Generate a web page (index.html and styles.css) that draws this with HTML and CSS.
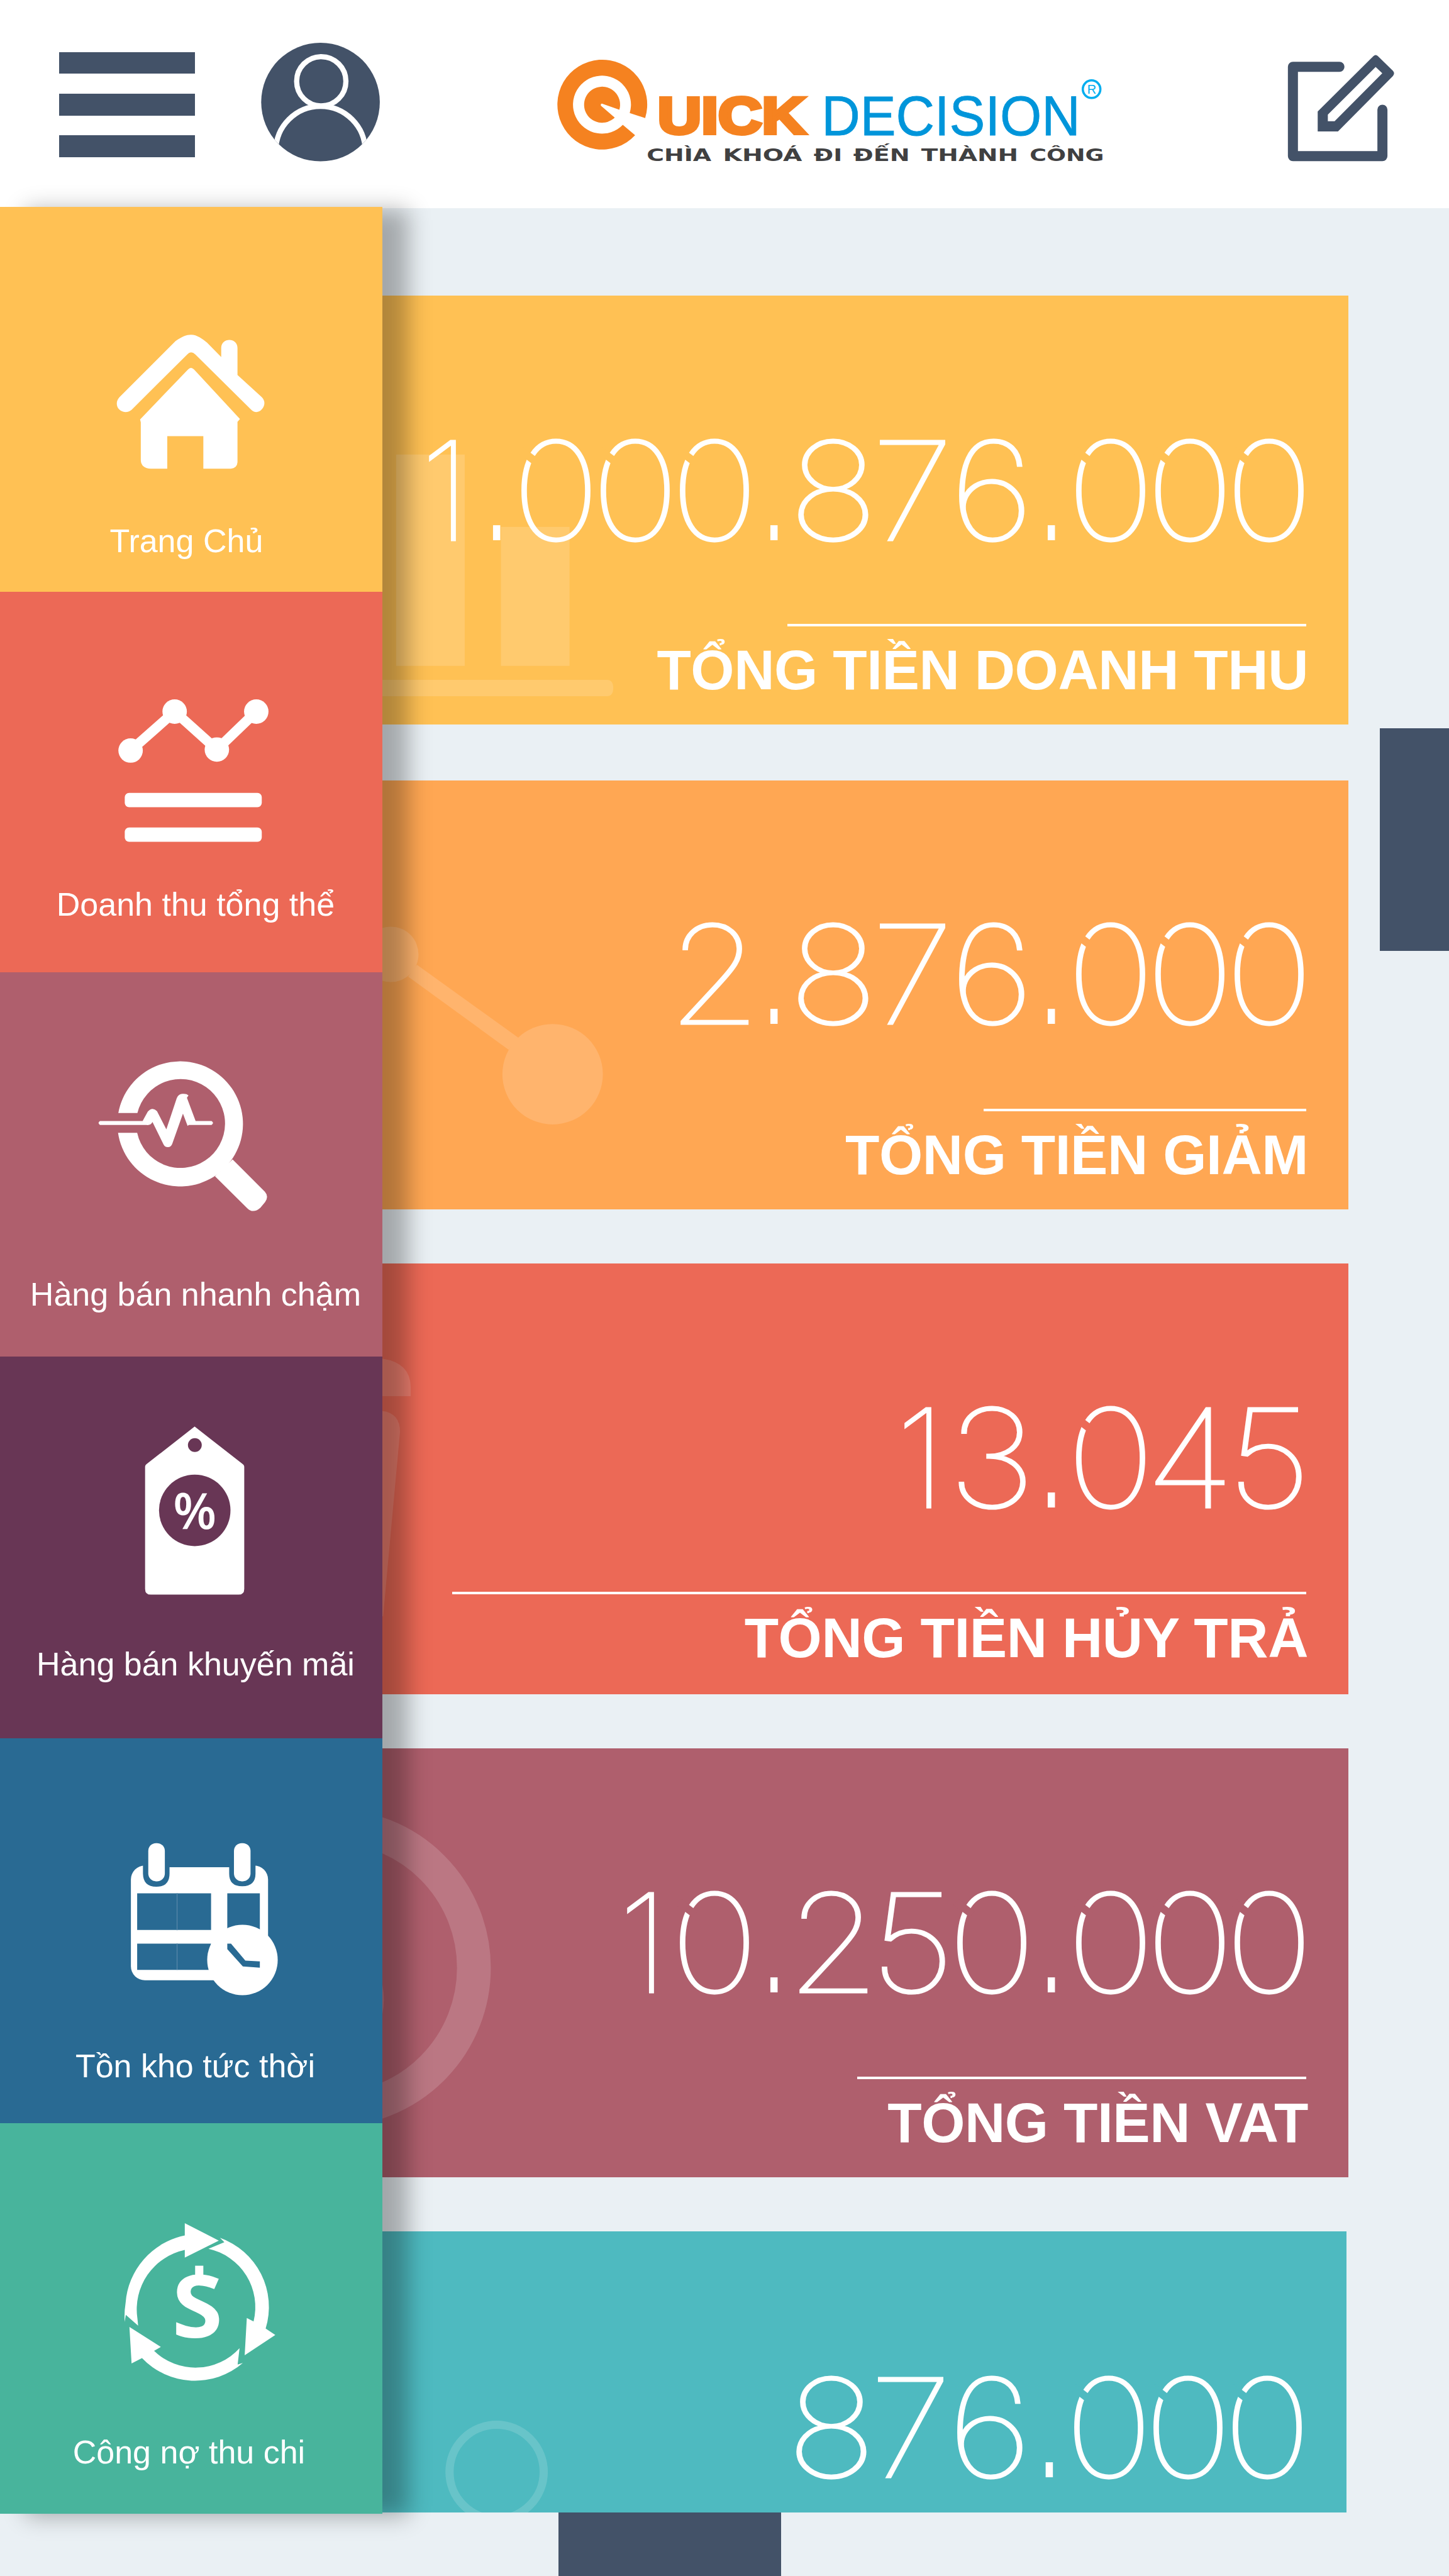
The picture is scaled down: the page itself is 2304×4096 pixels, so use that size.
FILE: index.html
```html
<!DOCTYPE html>
<html lang="vi">
<head>
<meta charset="utf-8">
<title>Quick Decision</title>
<link rel="stylesheet" href="styles.css">
</head>
<body>
<header class="topbar">
  <button class="menu" aria-label="Menu"><span></span><span></span><span></span></button>
  <svg class="user" viewBox="541 88 246 246">
    <defs><clipPath id="disc"><circle cx="664.2" cy="210.8" r="122.8"/></clipPath></defs>
    <circle cx="664.2" cy="210.8" r="122.8" fill="#435268"/>
    <g clip-path="url(#disc)" fill="none" stroke="#fff" stroke-width="10.8">
      <circle cx="665.8" cy="167.7" r="51"/>
      <circle cx="664.2" cy="312" r="92.5"/>
    </g>
  </svg>
  <svg class="logo" viewBox="1150 110 1150 240">
    <g fill="#f58220">
      <path d="M1336 245A93 93 0 1 0 1315.2 280.7L1289.7 259A60 60 0 1 1 1304 234.7Z"/>
      <path d="M1282.6 228A37.3 37.3 0 1 0 1273 244L1244.3 219.3Q1243.5 215 1246.5 215Z"/>
    </g>
    <text class="logo-quick" x="1362" y="277.3" textLength="306" lengthAdjust="spacingAndGlyphs">UICK</text>
    <text class="logo-decision" x="1701" y="281" textLength="536" lengthAdjust="spacingAndGlyphs">DECISION</text>
    <circle cx="2260.3" cy="185.3" r="18.2" fill="none" stroke="#00aeef" stroke-width="4.6"/>
    <text class="logo-r" x="2260.6" y="194.7">R</text>
    <g class="logo-tag">
      <text x="1339" y="333.7" textLength="134" lengthAdjust="spacingAndGlyphs">CHÌA</text>
      <text x="1497" y="333.7" textLength="164" lengthAdjust="spacingAndGlyphs">KHOÁ</text>
      <text x="1685" y="333.7" textLength="59" lengthAdjust="spacingAndGlyphs">ĐI</text>
      <text x="1767" y="333.7" textLength="117" lengthAdjust="spacingAndGlyphs">ĐẾN</text>
      <text x="1907.6" y="333.7" textLength="201" lengthAdjust="spacingAndGlyphs">THÀNH</text>
      <text x="2132" y="333.7" textLength="154" lengthAdjust="spacingAndGlyphs">CÔNG</text>
    </g>
  </svg>
  <svg class="edit" viewBox="2660 108 232 232">
    <path d="M2773 138.3H2676.7V323.3H2862V227" fill="none" stroke="#435268" stroke-width="20.8" stroke-linecap="round" stroke-linejoin="round"/>
    <path fill="#435268" fill-rule="evenodd" d="M2728 230.7L2843.3 116Q2848 112 2852.7 116L2884 146.7Q2888.500 152 2883.3 157.700L2770 272H2728ZM2749 237.300L2848 138.700L2861.700 151.700L2763 251H2749Z"/>
  </svg>
</header>

<main class="page">
  <nav class="sidebar">
    <a class="item home">
      <svg viewBox="0 429 791.5 657.2" fill="#fff">
        <path d="M247.4 823L363.5 706.700C377 697 386 693.500 395.400 693.500C408 693.500 419 702 428.600 710L458 740V721C458 699 491.700 699 491.700 721V777L542 823C555 836 542 853.700 531 853.700C527 853.700 523 852 519.800 848.600L404.300 734.300Q395.400 726 387.800 734.300L273 848.600C269 852 265 853.700 259.600 853.700C243 853 236 835 247.400 823Z"/>
        <path d="M389 766Q395.400 758 403 767L496.800 868L491.700 874V957.800Q491 970 478 971H421V903.700H346.300V971H312.500Q292 970 291.500 953V875L290 869Z"/>
      </svg>
      <span class="label">Trang Chủ</span>
    </a>
    <a class="item revenue">
      <svg viewBox="0 1225 791.5 613" fill="#fff">
        <path d="M270.400 1553.700L361.600 1473L449 1551.600L530.600 1473" fill="none" stroke="#fff" stroke-width="20.500"/>
        <circle cx="270.4" cy="1553.7" r="25.3"/><circle cx="361.6" cy="1473" r="25.3"/>
        <circle cx="449" cy="1551.6" r="25.3"/><circle cx="530.6" cy="1473" r="25.3"/>
        <rect x="258.3" y="1641.400" width="283.700" height="29.600" rx="9"/>
        <rect x="258.3" y="1712.900" width="283.700" height="29.600" rx="9"/>
      </svg>
      <span class="label">Doanh thu tổng thể</span>
    </a>
    <a class="item speed">
      <svg viewBox="0 2012.5 791.5 634" fill="#fff">
        <path d="M245 2304A130 129.500 0 1 1 244.400 2345H284A92 92 0 1 0 284.500 2304Z"/>
        <path d="M481.500 2400L548.500 2467Q557 2477 549 2488L539 2500Q524 2513 512 2501L445 2434.700Z"/>
        <path d="M207 2320.400H295.300L306 2301Q315.700 2290 325 2300L344.400 2337.800L366 2273Q370 2264 378 2264.300Q386 2263.500 390.300 2267.300L387 2272.400L405 2320.400H438Q444 2324.500 438 2328.600H391L388.400 2330.600L378.800 2305L356.500 2368Q354 2374.500 347.600 2374.500Q341 2374.500 338.600 2369L315.700 2322.400Q312 2330 303 2328.600H207Q201 2324.500 207 2320.400Z"/>
      </svg>
      <span class="label">Hàng bán nhanh chậm</span>
    </a>
    <a class="item promo">
      <svg viewBox="0 2808 791.5 603">
        <path fill="#fff" d="M403 2953L503 3031Q505.700 3033 505.700 3036V3289Q505.700 3301 493.700 3301H312.400Q300.400 3301 300.400 3289V3036Q300.400 3033 303 3031Z"/>
        <circle cx="403.4" cy="2991.3" r="14.300" fill="#683655"/>
        <circle cx="403.2" cy="3126.5" r="74" fill="#683655"/>
        <text class="percent" x="403.2" y="3165">%</text>
      </svg>
      <span class="label">Hàng bán khuyến mãi</span>
    </a>
    <a class="item stock">
      <svg viewBox="0 3599.6 791.5 643.7" fill="#fff">
        <rect x="271" y="3863" width="284" height="237.500" rx="29"/>
        <path fill="#296a93" d="M296 3850H351V3880Q351 3907 323.700 3907T296 3880ZM474.500 3850H529V3880Q529 3906 501.700 3906T474.500 3880ZM351 3855H474.500V3866.400H351ZM284 3920.700H437V3996.500H284ZM284 4024.700H437V4079H284ZM470.600 3920.700H538V3996H470.600Z"/>
        <path d="M366.600 3920V3997M366.600 4024V4079" stroke="#5b8bac" stroke-width="1.500"/>
        <rect x="307" y="3816.700" width="34.300" height="79" rx="16"/>
        <rect x="484.400" y="3816.700" width="34.300" height="79" rx="16"/>
        <circle cx="502" cy="4058.600" r="73"/>
        <path fill="#296a93" d="M470.600 4024.700H478.300L508 4059.800L538 4061.500V4074.500L502.800 4072L470.600 4036Z"/>
      </svg>
      <span class="label">Tồn kho tức thời</span>
    </a>
    <a class="item debt">
      <svg viewBox="0 4395.6 791.5 648" fill="#fff">
        <path d="M258 4807L260.500 4792.500L286 4815L284.500 4800A126 126 0 0 1 382.600 4658V4673.800L453 4638.700L382.600 4602.500V4628A154 154 0 0 0 260 4768Q257 4786 258 4807Z"/>
        <path d="M455.400 4633L464.500 4642L431.600 4655.700A123.500 123.500 0 0 1 525 4806L511 4799L506.600 4876L570 4834L550 4820.700A151.500 151.500 0 0 0 455.400 4633Z"/>
        <path d="M496 4861.500L492 4895.400L502.800 4892A151.500 151.500 0 0 1 294 4881.800L272.400 4893L268 4817.400L333 4859L319 4867A123.500 123.500 0 0 0 496 4861.500Z"/>
        <rect x="404" y="4690.700" width="17" height="24"/>
        <text class="dollar" x="356" y="4840" textLength="105" lengthAdjust="spacingAndGlyphs">S</text>
      </svg>
      <span class="label">Công nợ thu chi</span>
    </a>
  </nav>

  <section class="cards">
    <article class="card c1">
      <svg class="decor" viewBox="791.5 612.5 2000 887.8">
        <path d="M820 941.600H962V1379H820ZM1037 1091.500H1179V1379H1037ZM780 1408H1256Q1269.500 1408 1269.500 1425T1256 1442H780Z"/>
      </svg>
      <p class="number"><i class="one">1</i><i class="dot">.</i><i class="zero">0</i><i class="zero">0</i><i class="zero">0</i><i class="dot">.</i><i>8</i><i>7</i><i>6</i><i class="dot">.</i><i class="zero">0</i><i class="zero">0</i><i class="zero">0</i></p>
      <hr class="rule">
      <h2 class="title">TỔNG TIỀN DOANH THU</h2>
    </article>
    <article class="card c2">
      <svg class="decor" viewBox="791.5 1616.4 2000 887.6">
        <circle cx="809" cy="1976.400" r="57.300"/>
        <circle cx="1144" cy="2224.500" r="104"/>
        <path d="M863 1998L1073 2149L1053 2174L845 2022.600Z"/>
      </svg>
      <p class="number"><i>2</i><i class="dot">.</i><i>8</i><i>7</i><i>6</i><i class="dot">.</i><i class="zero">0</i><i class="zero">0</i><i class="zero">0</i></p>
      <hr class="rule">
      <h2 class="title">TỔNG TIỀN GIẢM</h2>
    </article>
    <article class="card c3">
      <svg class="decor" viewBox="791.5 2616.4 2000 892.2">
        <path d="M780 2812Q850 2818 850 2872V2891H780ZM780 2921Q828 2921 828 2965L793 3347H780Z"/>
      </svg>
      <p class="number"><i class="one">1</i><i>3</i><i class="dot">.</i><i class="zero">0</i><i class="four">4</i><i>5</i></p>
      <hr class="rule">
      <h2 class="title">TỔNG TIỀN HỦY TRẢ</h2>
    </article>
    <article class="card c4">
      <svg class="decor" viewBox="791.5 3620 2000 887.5">
        <circle cx="687" cy="4074.500" r="294" fill="none" stroke="#fff" stroke-width="70"/>
        <circle cx="634.500" cy="4140" r="160"/>
      </svg>
      <p class="number"><i class="one">1</i><i class="zero">0</i><i class="dot">.</i><i>2</i><i>5</i><i class="zero">0</i><i class="dot">.</i><i class="zero">0</i><i class="zero">0</i><i class="zero">0</i></p>
      <hr class="rule">
      <h2 class="title">TỔNG TIỀN VAT</h2>
    </article>
    <article class="card c5">
      <svg class="decor" viewBox="791.5 4620 2000 581.8">
        <circle cx="1028" cy="5118" r="97.500" fill="none" stroke="#fff" stroke-width="17"/>
      </svg>
      <p class="number"><i>8</i><i>7</i><i>6</i><i class="dot">.</i><i class="zero">0</i><i class="zero">0</i><i class="zero">0</i></p>
    </article>
  </section>
  <div class="tab tab-right"></div>
  <div class="tab tab-bottom"></div>
</main>
</body>
</html>
```

FILE: styles.css
```css
:root {
  --u: 0.768px; /* one design unit */
  --slate: #435268;
  --yellow: #ffc154;
  --orange: #ffa753;
  --red: #ec6956;
  --mauve: #af5f6d;
  --purple: #683655;
  --blue: #296a93;
  --green: #48b49c;
  --teal: #4ebac0;
}

* { box-sizing: border-box; margin: 0; padding: 0; }

body {
  width: 2304px;
  height: 4096px;
  overflow: hidden;
  background: #eaf0f4;
  font-family: "Liberation Sans", Arial, sans-serif;
}

svg { display: block; }

/* Top bar */
.topbar {
  display: flex;
  align-items: flex-start;
  height: calc(431 * var(--u));
  background: #fff;
}
.menu {
  display: flex;
  flex-direction: column;
  gap: calc(41 * var(--u));
  width: calc(281.5 * var(--u));
  margin: calc(108 * var(--u)) 0 0 calc(121.800 * var(--u));
  border: 0;
  background: none;
}
.menu span { height: calc(45 * var(--u)); background: var(--slate); }
.user {
  width: calc(246 * var(--u));
  height: calc(246 * var(--u));
  margin: calc(88 * var(--u)) 0 0 calc(137.700 * var(--u));
}
.logo {
  width: calc(1150 * var(--u));
  height: calc(240 * var(--u));
  margin: calc(110 * var(--u)) 0 0 calc(363 * var(--u));
}
.logo-quick {
  font-size: 106px;
  font-weight: 700;
  fill: #f58220;
  stroke: #f58220;
  stroke-width: 7.5px;
}
.logo-decision { font-size: 116px; fill: #0095da; stroke: #0095da; stroke-width: 1px; }
.logo-r { font-size: 26px; fill: #00aeef; text-anchor: middle; }
.logo-tag { font-family: "DejaVu Sans", sans-serif; font-size: 35.5px; font-weight: 700; fill: #404041; }
.edit {
  width: calc(232 * var(--u));
  height: calc(232 * var(--u));
  margin: calc(108 * var(--u)) 0 0 calc(360 * var(--u));
}

/* Body */
.page { position: relative; display: flex; height: calc(4902 * var(--u)); }

.sidebar {
  position: relative;
  z-index: 1;
  align-self: flex-start;
  width: calc(791.5 * var(--u));
  margin-top: calc(-2 * var(--u));
  box-shadow: calc(53 * var(--u)) calc(5 * var(--u)) 34px rgba(0, 0, 0, 0.3);
}
.item { display: block; overflow: hidden; color: #fff; text-align: center; }
.item svg { width: 100%; }
.label { display: block; font-size: 52px; line-height: 52px; white-space: nowrap; }
.home { height: calc(796 * var(--u)); background: var(--yellow); }
.revenue { height: calc(787.5 * var(--u)); background: var(--red); }
.speed { height: calc(795.5 * var(--u)); background: var(--mauve); }
.promo { height: calc(791.6 * var(--u)); background: var(--purple); }
.stock { height: calc(796 * var(--u)); background: var(--blue); }
.debt { height: calc(808.4 * var(--u)); background: var(--green); }
.home .label { padding-right: 15px; }
.debt .label { padding-right: 7px; }
.revenue .label, .speed .label, .promo .label { padding-left: 14px; }
.stock .label { padding-left: 13px; }
.percent { font: 600 104px "Open Sans", sans-serif; fill: #fff; text-anchor: middle; }
.dollar { font: 700 181px "Open Sans", sans-serif; }

/* Cards */
.cards {
  display: flex;
  flex-direction: column;
  width: calc(2000 * var(--u));
  padding-top: calc(181.5 * var(--u));
}
.card {
  position: relative;
  display: flex;
  flex-direction: column;
  align-items: flex-end;
  height: calc(887.7 * var(--u));
  margin-bottom: calc(116 * var(--u));
  padding: calc(262 * var(--u)) calc(87 * var(--u)) 0 0;
  overflow: hidden;
  background: var(--card);
  color: #fff;
}
.decor {
  position: absolute;
  top: 0;
  left: 0;
  width: calc(2000 * var(--u));
  fill: #fff;
  opacity: 0.15;
}
.c1 { --card: var(--yellow); --line: 1074.800; }
.c2 { --card: var(--orange); --line: 667.400; margin-bottom: calc(112.4 * var(--u)); padding-top: calc(259.5 * var(--u)); }
.c3 { --card: var(--red); --line: 1768; height: calc(892.2 * var(--u)); margin-bottom: calc(111.4 * var(--u)); }
.c4 { --card: var(--mauve); --line: 929.400; margin-bottom: calc(112.3 * var(--u)); }
.c5 { --card: var(--teal); width: calc(1995.800 * var(--u)); height: calc(581.8 * var(--u)); margin-bottom: 0; padding-top: calc(266 * var(--u)); }

.number {
  position: relative;
  display: flex;
  align-items: baseline;
  height: 222px;
  margin-right: -4px;
  font-family: Inter, sans-serif;
  font-size: 217px;
  font-weight: 100;
  line-height: 216px;
  -webkit-text-stroke: 3px #fff;
}
.number i {
  display: flex;
  justify-content: center;
  width: 126px;
  font-style: normal;
  transform: scaleX(1.1);
}
.number .dot {
  width: 63px;
  font-family: "Liberation Sans", sans-serif;
  font-size: 120px;
  -webkit-text-stroke: 0;
  transform: scaleY(1.85);
  transform-origin: 50% 149.6px;
}
.number .one { justify-content: flex-end; padding-right: 10px; transform: none; }
.zero, .four { position: relative; }
.zero::after {
  content: "";
  position: absolute;
  top: 47px;
  left: 8px;
  width: 30px;
  height: 12px;
  background: var(--card);
  transform: rotate(40deg);
}
.rule {
  width: calc(var(--line) * var(--u));
  height: 4px;
  margin-top: calc(128 * var(--u));
  border: 0;
  background: #fff;
}
.c2 .rule { margin-top: calc(130.5 * var(--u)); }
.title {
  margin-top: calc(33 * var(--u));
  margin-right: -3px;
  font-size: 89px;
  font-weight: 700;
  line-height: 89px;
  letter-spacing: -0.4px;
  white-space: nowrap;
}

/* Edge tabs floating over the page */
.tab { position: absolute; background: var(--slate); }
.tab-right {
  top: calc(1076.300 * var(--u));
  right: 0;
  width: calc(143.5 * var(--u));
  height: calc(461.7 * var(--u));
}
.tab-bottom {
  bottom: 0;
  left: calc(1155.700 * var(--u));
  width: calc(461.7 * var(--u));
  height: calc(131.2 * var(--u));
}
```
